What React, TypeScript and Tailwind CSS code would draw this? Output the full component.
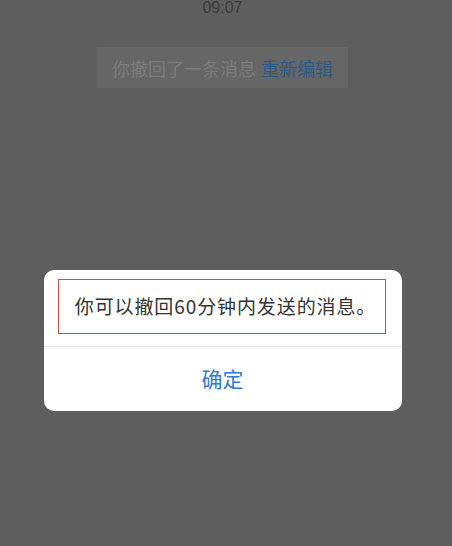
export default function App() {
  return (
    <div
      className="w-full h-[546px] overflow-hidden bg-[#5e5e5e] flex flex-col items-center pr-[7px]"
      style={{ fontFamily: '"Noto Sans CJK SC", "Liberation Sans", sans-serif' }}
    >
      {/* 时间 */}
      <div className="mt-[-2px] h-[20px] text-[16px] leading-[20px] text-[#3c3c3c]" style={{ fontFamily: '"Liberation Sans", sans-serif' }}>
        09:07
      </div>

      {/* 撤回提示 */}
      <div className="mt-[29px] w-[251px] h-[41px] bg-[#666666] flex items-center justify-center text-[18px] leading-none">
        <span className="text-[#7b7b7b]">你撤回了一条消息</span>
        <span className="ml-[5px] text-[#2d5b88]">重新编辑</span>
      </div>

      {/* 弹窗 */}
      <div className="mt-[182px] w-[358px] bg-white rounded-[10px] flex flex-col">
        <div className="pt-[9px] pl-[14px] pr-[16px] pb-[12px]">
          <div className="h-[55px] pl-[8px] border-[1.5px] border-[#d8483e] flex items-center justify-center text-[19px] text-[#333333] tracking-[0.9px]">
            你可以撤回60分钟内发送的消息。
          </div>
        </div>
        <div className="h-px bg-[#e6e6e6]" />
        <div className="h-[64px] flex items-center justify-center text-[21px] text-[#2f7ad3]">
          确定
        </div>
      </div>
    </div>
  );
}
